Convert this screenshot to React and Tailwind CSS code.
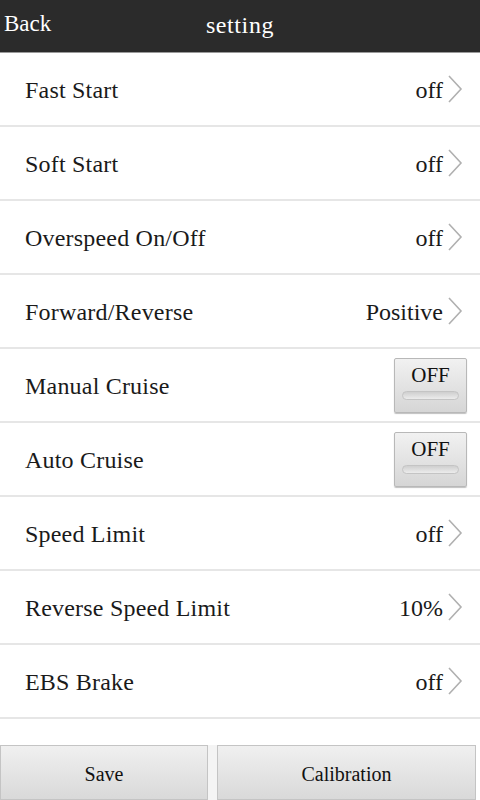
import React from 'react';

const rows = [
  { label: 'Fast Start', value: 'off' },
  { label: 'Soft Start', value: 'off' },
  { label: 'Overspeed On/Off', value: 'off' },
  { label: 'Forward/Reverse', value: 'Positive' },
  { label: 'Manual Cruise', toggle: true },
  { label: 'Auto Cruise', toggle: true },
  { label: 'Speed Limit', value: 'off' },
  { label: 'Reverse Speed Limit', value: '10%' },
  { label: 'EBS Brake', value: 'off' },
];

const Chevron = () => (
  <svg width="16" height="28" viewBox="0 0 16 28" className="ml-[4px]">
    <path d="M2 1 L14 14 L2 27" fill="none" stroke="#b0b0b0" strokeWidth="1.6" />
  </svg>
);

const OffToggle = () => (
  <div className="w-[73px] h-[55px] mr-[13px] rounded-[2px] border border-[#b8b8b8] bg-gradient-to-b from-[#f1f1f1] to-[#d6d6d6] shadow-[0_1px_1px_rgba(0,0,0,0.25)] flex flex-col items-center pt-[6px]">
    <span className="text-[21px] leading-[20px] text-[#111]">OFF</span>
    <div className="mt-[6px] w-[57px] h-[9px] rounded-full bg-gradient-to-b from-[#cfcfcf] to-[#ececec] border border-[#c4c4c4]" />
  </div>
);

export default function App() {
  return (
    <div className="w-[480px] h-[800px] bg-white flex flex-col overflow-hidden font-['Liberation_Serif',serif]">
      {/* 상단 바 */}
      <div className="h-[52px] bg-[#2b2b2b] flex items-center relative shrink-0">
        <span className="text-white text-[23px] pl-[4px] pb-[3px]">Back</span>
        <span className="absolute left-0 right-0 text-center text-white text-[24px] tracking-[0.6px] pb-[3px] pointer-events-none">setting</span>
      </div>
      <div className="h-[1px] bg-[#9a9a9a] shrink-0" />

      <div className="flex-1 overflow-hidden">
        {rows.map((r) => (
          <div key={r.label} className="h-[74px] flex items-center justify-between border-b-2 border-[#e6e6e6]">
            <span className="pl-[25px] pt-[2px] text-[24px] tracking-[0.2px] text-[#1a1a1a]">{r.label}</span>
            {r.toggle ? (
              <OffToggle />
            ) : (
              <div className="flex items-center pr-[17px]">
                <span className="text-[24px] pt-[2px] text-[#1a1a1a]">{r.value}</span>
                <Chevron />
              </div>
            )}
          </div>
        ))}
      </div>

      {/* 하단 버튼 */}
      <div className="h-[55px] flex shrink-0 bg-white">
        <button className="w-[208px] h-full border border-[#c4c4c4] bg-gradient-to-b from-[#f0f0f0] to-[#d9d9d9] text-[20px] text-[#111] pt-[2px]">Save</button>
        <div className="w-[9px] bg-[#f4f4f4]" />
        <button className="w-[259px] h-full border border-[#c4c4c4] bg-gradient-to-b from-[#f0f0f0] to-[#d9d9d9] text-[20px] text-[#111] pt-[2px]">Calibration</button>
      </div>
    </div>
  );
}
